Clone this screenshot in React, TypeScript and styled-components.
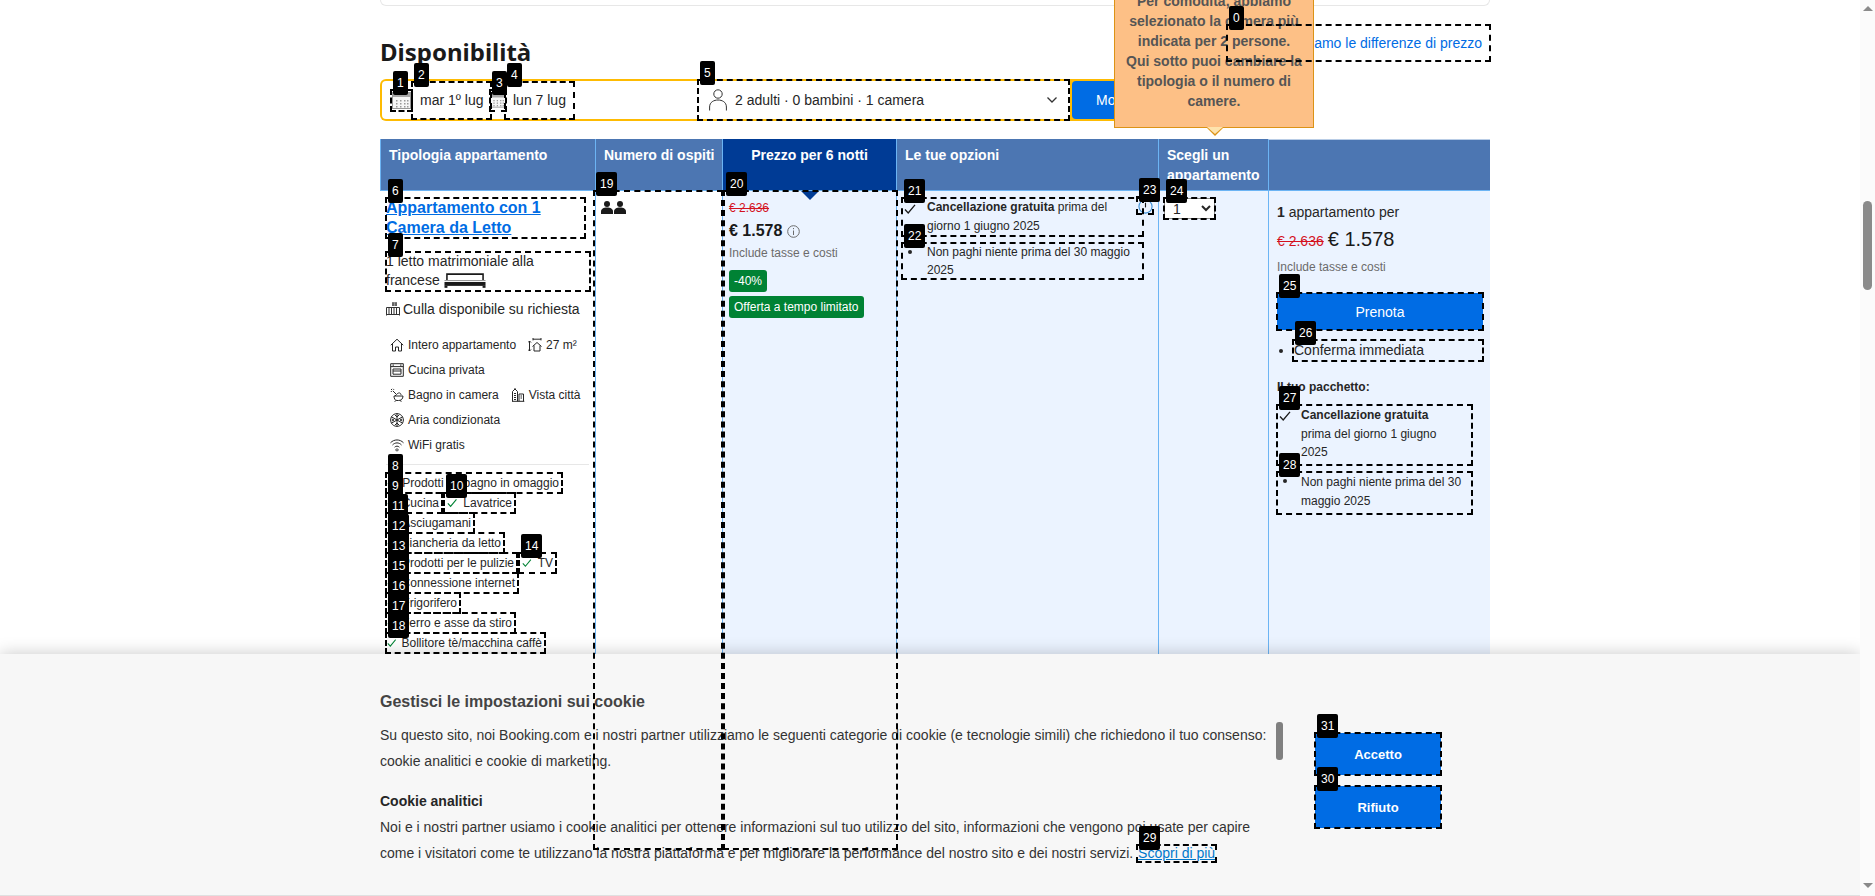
import { ReactNode } from "react";
import styled, { createGlobalStyle } from "styled-components";

const Reset = createGlobalStyle`
  html, body {
    margin: 0;
    height: 100%;
    overflow: hidden;
    background: #fff;
  }
  body {
    font-family: "Liberation Sans", Arial, sans-serif;
    color: #262626;
  }
  * { box-sizing: border-box; }
`;

const Screen = styled.div`
  display: flex;
  width: 1875px;
  height: 896px;
  overflow: hidden;
`;

const Main = styled.main`
  position: relative;
  flex: 1;
  height: 896px;
  padding-left: 380px;
  overflow: hidden;
`;

const Rail = styled.aside`
  width: 15px;
  height: 896px;
  background: #fbfbfb;
  display: flex;
  flex-direction: column;
  align-items: center;
  padding-top: 6px;
`;

const RailArrow = styled.div<{ $down?: boolean }>`
  width: 0;
  height: 0;
  border-left: 5px solid transparent;
  border-right: 5px solid transparent;
  ${(p) => (p.$down ? "border-top: 5px solid #8a8a8a;" : "border-bottom: 5px solid #8a8a8a;")}
`;

const RailThumb = styled.div`
  width: 9px;
  height: 89px;
  margin-top: 190px;
  margin-bottom: 593px;
  background: #8a8a8a;
  border-radius: 5px;
`;

const Content = styled.div`
  width: 1110px;
`;

const TopCard = styled.div`
  height: 6px;
  border: 1px solid #e7e7e7;
  border-top: 0;
  border-radius: 0 0 8px 8px;
`;

const TitleRow = styled.div`
  display: flex;
  justify-content: space-between;
  align-items: flex-start;
  margin-top: 19px;
  height: 54px;
`;

const Title = styled.h2`
  margin: 11px 0 0;
  font-family: "Noto Sans", sans-serif;
  font-size: 24px;
  line-height: 32px;
  font-weight: 700;
  color: #1a1a1a;
`;

/* --- annotation frames --- */
const Marked = styled.div<{ $w?: number; $h?: number; $ml?: number }>`
  position: relative;
  ${(p) => (p.$w ? `width: ${p.$w}px;` : "")}
  ${(p) => (p.$h ? `height: ${p.$h}px;` : "")}
  ${(p) => (p.$ml ? `margin-left: ${p.$ml}px;` : "")}
`;

const Frame = styled.div<{ $inset: string }>`
  position: absolute;
  inset: ${(p) => p.$inset};
  border: 2px dashed #000;
  z-index: 20;
  pointer-events: none;
`;

const Tag = styled.span`
  position: absolute;
  top: -20px;
  left: 1px;
  height: 24px;
  padding: 0 4px;
  background: #000;
  border-radius: 2px;
  color: #fff;
  font-size: 12px;
  line-height: 24px;
  font-weight: 400;
`;

const Mark = ({ n, inset = "-1px" }: { n: number; inset?: string }) => (
  <Frame $inset={inset}>
    <Tag>{n}</Tag>
  </Frame>
);

const PriceLink = styled.a`
  display: flex;
  align-items: center;
  justify-content: flex-end;
  height: 36px;
  padding-right: 8px;
  color: #006ce4;
  font-size: 14px;
  white-space: nowrap;
`;

/* --- search bar --- */
const SearchBar = styled.div`
  position: relative;
  display: flex;
  align-items: stretch;
  height: 42px;
  width: 860px;
  background: #febb02;
  border-radius: 6px;
`;

const DateField = styled.div`
  display: flex;
  align-items: center;
  width: 315px;
  margin: 2px 0 2px 2px;
  padding-left: 9px;
  background: #fff;
  border-radius: 4px 0 0 4px;
  font-size: 14px;
`;

const DateIconBox = styled(Marked)`
  display: flex;
  align-items: center;
  justify-content: center;
  height: 21px;
`;

const DateValue = styled(Marked)`
  display: flex;
  align-items: center;
  height: 37px;
  padding-left: 8px;
`;

const GuestField = styled(Marked)`
  display: flex;
  align-items: center;
  width: 373px;
  margin: 2px 0;
  padding: 0 12px;
  gap: 8px;
  background: #fff;
  font-size: 14px;
`;

const Chevron = styled.svg`
  margin-left: auto;
`;

const SearchButton = styled.button`
  width: 165px;
  margin: 2px;
  padding: 0 0 0 24px;
  border: 0;
  border-radius: 4px;
  background: #006ce4;
  color: #fff;
  font: 14px "Liberation Sans", Arial, sans-serif;
  text-align: left;
`;

const Tooltip = styled.div`
  position: absolute;
  left: 734px;
  bottom: -7px;
  width: 200px;
  padding: 16px 10px;
  background: #fdc086;
  border: 1px solid #dc9316;
  color: #555;
  font-size: 14px;
  line-height: 20px;
  font-weight: 700;
  text-align: center;
  z-index: 10;

  &::before,
  &::after {
    content: "";
    position: absolute;
    left: 92px;
    width: 0;
    height: 0;
    border-left: 8px solid transparent;
    border-right: 8px solid transparent;
  }
  &::before {
    bottom: -9px;
    border-top: 8px solid #dc9316;
  }
  &::after {
    bottom: -7px;
    border-top: 7px solid #fee3ad;
  }
`;

/* --- table --- */
const Table = styled.div`
  display: grid;
  grid-template-columns: 215px 127px 174px 262px 110px 222px;
  grid-template-rows: 52px 659px;
  margin-top: 18px;
`;

const HeadCell = styled.div<{ $active?: boolean; $last?: boolean }>`
  position: relative;
  padding: 6px 0 0 8px;
  background: ${(p) => (p.$active ? "#003b95" : "#4c76b2")};
  border-left: 1px solid #6cb4f4;
  border-bottom: 1px solid #6cb4f4;
  color: #fff;
  font-size: 14px;
  line-height: 20px;
  font-weight: 700;
  ${(p) => (p.$active ? "text-align: center; padding-left: 0;" : "")}
  ${(p) => (p.$last ? "border-top: 1px solid #b9cde6;" : "")}

  ${(p) =>
    p.$active
      ? `&::after {
    content: "";
    position: absolute;
    left: 78px;
    bottom: -10px;
    border-left: 9px solid transparent;
    border-right: 9px solid transparent;
    border-top: 9px solid #003b95;
    z-index: 2;
  }`
      : ""}
`;

const Cell = styled.div<{ $tint?: boolean }>`
  position: relative;
  background: ${(p) => (p.$tint ? "#ebf3ff" : "#fff")};
  border-left: 1px solid #6cb4f4;
`;

const RoomCell = styled(Cell)`
  padding: 7px 0 0 6px;
  border-left: 0;
`;

const RoomName = styled.a`
  display: block;
  color: #006ce4;
  font-size: 16px;
  line-height: 20px;
  font-weight: 700;
  text-decoration: underline;
`;

const BedLine = styled.div`
  padding-bottom: 1px;
  font-size: 14px;
  line-height: 19px;
`;

const BedIcon = styled.svg`
  vertical-align: -3px;
`;

const CribLine = styled.div`
  display: flex;
  align-items: center;
  gap: 3px;
  margin-top: 8px;
  height: 20px;
  font-size: 14px;
`;

const Facilities = styled.div`
  margin-top: 13px;
  padding-left: 4px;
`;

const FacilityRow = styled.div`
  display: flex;
  align-items: center;
  gap: 12px;
  height: 25px;
  font-size: 12px;
`;

const Facility = styled.span`
  display: inline-flex;
  align-items: center;
  gap: 4px;
`;

const Rule = styled.hr`
  width: 203px;
  height: 1px;
  margin: 7px 0 8px;
  border: 0;
  background: #e7e7e7;
`;

const PerkRow = styled.div`
  display: flex;
  height: 20px;
`;

const Perk = styled(Marked)<{ $second?: boolean }>`
  display: inline-flex;
  align-items: center;
  gap: ${(p) => (p.$second ? "6px" : "5px")};
  height: 20px;
  font-size: 12px;
  white-space: nowrap;
  padding: 0 3px 0 ${(p) => (p.$second ? "3px" : "1px")};
  ${(p) => (p.$second ? "margin-left: 2px;" : "")}
`;

const People = styled.svg`
  margin: 10px 0 0 5px;
  display: block;
`;

const PriceCell = styled(Cell)`
  padding: 9px 0 0 6px;
`;

const OldPrice = styled.div`
  color: #d4111e;
  font-size: 12px;
  line-height: 16px;
  text-decoration: line-through;
`;

const NowPrice = styled.div`
  display: flex;
  align-items: center;
  gap: 5px;
  margin-top: 3px;
  height: 24px;
  color: #1a1a1a;
  font-size: 16px;
  font-weight: 700;
`;

const TaxNote = styled.div`
  margin-top: 1px;
  color: #6b6b6b;
  font-size: 12px;
  line-height: 18px;
`;

const Badge = styled.div`
  width: fit-content;
  height: 22px;
  margin-top: 4px;
  padding: 0 5px;
  background: #008234;
  border-radius: 3px;
  color: #fff;
  font-size: 12px;
  line-height: 22px;
`;

const FirstBadge = styled(Badge)`
  margin-top: 8px;
`;

const OptionsCell = styled(Cell)`
  padding: 7px 15px 0 5px;
`;

const Option = styled(Marked)<{ $lh: number; $top?: number }>`
  padding: 0 10px 0 25px;
  font-size: 12px;
  line-height: ${(p) => p.$lh}px;
  ${(p) => (p.$top ? `margin-top: ${p.$top}px;` : "")}
`;

const OptionGlyph = styled.div`
  position: absolute;
  left: 2px;
  top: 5px;
  line-height: 0;
`;

const OptionDot = styled.i`
  position: absolute;
  left: 6px;
  top: 7px;
  width: 4px;
  height: 4px;
  border-radius: 50%;
  background: #262626;
`;

const HelpBox = styled(Marked)`
  position: absolute;
  top: -1px;
  right: -10px;
  width: 16px;
  height: 17px;
`;

const PickCell = styled(Cell)`
  padding: 7px 0 0 5px;
`;

const RoomSelect = styled.select`
  display: block;
  width: 51px;
  height: 21px;
  padding: 0 0 0 4px;
  border: 1px solid #8a8a8a;
  background: #fff;
  color: #262626;
  font: 14px "Liberation Sans", Arial, sans-serif;
`;

const ReserveCell = styled(Cell)`
  padding: 11px 7px 0 8px;
`;

const Lead = styled.div`
  font-size: 14px;
  line-height: 20px;
`;

const PriceLine = styled.div`
  display: flex;
  align-items: baseline;
  gap: 4px;
  height: 28px;
  margin-top: 3px;
  font-size: 20px;
  line-height: 28px;
  color: #1a1a1a;
`;

const PriceLineOld = styled.span`
  color: #d4111e;
  font-size: 14px;
  text-decoration: line-through;
`;

const ReserveTax = styled(TaxNote)`
  margin-top: 5px;
`;

const ReserveButton = styled.button`
  display: block;
  width: 100%;
  height: 37px;
  border: 0;
  border-radius: 2px;
  background: #006ce4;
  color: #fff;
  font: 14px "Liberation Sans", Arial, sans-serif;
`;

const ConfirmRow = styled.div`
  display: flex;
  align-items: center;
  margin-top: 10px;
`;

const ConfirmDot = styled.i`
  width: 4px;
  height: 4px;
  margin-left: 2px;
  border-radius: 50%;
  background: #262626;
`;

const Confirm = styled(Marked)`
  width: 190px;
  height: 21px;
  margin-left: 10px;
  padding-left: 1px;
  font-size: 14px;
  line-height: 21px;
`;

const PackageTitle = styled.div`
  margin-top: 17px;
  font-size: 12px;
  line-height: 18px;
  font-weight: 700;
`;

const PackageItem = styled(Marked)<{ $top: number }>`
  width: 195px;
  margin-top: ${(p) => p.$top}px;
  padding: 1px 8px 0 24px;
  font-size: 12px;
  line-height: 18.5px;
`;

/* --- cookie banner --- */
const Banner = styled.section`
  position: absolute;
  left: 0;
  right: 0;
  bottom: 0;
  height: 242px;
  display: flex;
  align-items: flex-start;
  padding: 36px 0 0 380px;
  background: #f7f7f7;
  border-bottom: 1px solid #e0e0e0;
  box-shadow: 0 0 16px rgba(0, 0, 0, 0.22);
  z-index: 5;
`;

const BannerText = styled.div`
  width: 896px;
  color: #333;
  font-size: 14px;
  line-height: 26px;
`;

const BannerTitle = styled.h3`
  margin: 0 0 8px;
  color: #444;
  font-size: 16px;
  line-height: 24px;
  font-weight: 700;
`;

const BannerPara = styled.p`
  margin: 0 0 14px;
`;

const BannerSub = styled.h4`
  margin: 0;
  color: #262626;
  font-size: 14px;
  line-height: 26px;
  font-weight: 700;
`;

const MoreWrap = styled(Marked)`
  display: inline-block;
  line-height: 17px;
  padding: 0 1px;
`;

const MoreLink = styled.a`
  color: #0077cc;
  text-decoration: underline;
`;

const BannerThumb = styled.div`
  width: 7px;
  height: 38px;
  margin-top: 32px;
  background: #808080;
  border-radius: 3px;
`;

const BannerActions = styled.div`
  display: flex;
  flex-direction: column;
  gap: 11px;
  margin: 43px 0 0 32px;
`;

const BannerButton = styled.button`
  display: block;
  width: 126px;
  height: 42px;
  border: 0;
  background: #006ce4;
  color: #fff;
  font: 700 13px "Liberation Sans", Arial, sans-serif;
`;

/* --- drawings --- */
const Check = ({ c = "#008234" }: { c?: string }) => (
  <svg width="12" height="12" viewBox="0 0 12 12" fill="none" stroke={c} strokeWidth="1.3">
    <path d="M1 6.5 L4.2 10 L11 1.8" />
  </svg>
);

const Calendar = ({ w = 19 }: { w?: number }) => (
  <svg width={w} height="18" viewBox="0 0 19 18" fill="none">
    <rect x="0.5" y="1.5" width="18" height="16" fill="#f7f7f7" stroke="#999" />
    <rect x="1" y="2" width="17" height="4" fill="#a8a8a8" />
    {[4, 8, 12, 15].map((x) =>
      [9, 12, 15].map((y) => <rect key={`${x}-${y}`} x={x} y={y} width="1.5" height="1.5" fill="#999" />)
    )}
  </svg>
);

const Line = ({ d, w = 14, h = 14, box = "0 0 14 14" }: { d: string; w?: number; h?: number; box?: string }) => (
  <svg width={w} height={h} viewBox={box} fill="none" stroke="#262626" strokeWidth="1">
    <path d={d} />
  </svg>
);

const icons: Record<string, ReactNode> = {
  home: <Line d="M0.8 7.2 L7 1.2 L13.2 7.2 M2.5 5.8 V13 H5.5 V9 H8.5 V13 H11.5 V5.8" />,
  size: (
    <Line d="M5 1.2 H13 M5 0 V2.4 M13 0 V2.4 M1.5 3 V13 M0 4.5 L1.5 3 L3 4.5 M0 11.5 L1.5 13 L3 11.5 M4.5 8.5 L9 4.5 L13.5 8.5 M6 7.5 V13 H12 V7.5" />
  ),
  oven: <Line d="M0.7 0.7 H13.3 V13.3 H0.7 Z M0.7 3.6 H13.3 M3 6 H11 V11.2 H3 Z M3 8 H11 M2.5 2.1 H4 M10 2.1 H11.5" />,
  bath: (
    <Line d="M1 1 L2.2 2.2 M3 0.8 L4 1.8 M0.8 3 L1.8 4 M3 3 L6.5 6.5 L5 8 M7 6 C9 4 11 5 11 7 M4 8 H13 C13 11 11 12.5 8.5 12.5 H7 C5 12.5 4 10.5 4 8 M5.5 12.5 L4.8 13.8 M10.5 12.2 L11.2 13.8" />
  ),
  city: (
    <Line d="M1 13.3 H13.3 M1.5 13.3 V3.5 L4 1 L6.5 3.5 V13.3 M4 1 V0 M8 13.3 V6 H12.5 V13.3 M3 5.5 H5 M3 7.5 H5 M3 9.5 H5 M3 11.5 H5 M9.5 8 H11 M9.5 10 H11" />
  ),
  snow: (
    <Line d="M7 0.6 V13.4 M1.4 3.8 L12.6 10.2 M1.4 10.2 L12.6 3.8 M7 0.6 A6.4 6.4 0 1 1 6.99 0.6 M5 2 L7 4 L9 2 M5 12 L7 10 L9 12 M1.8 6 L4 7 L1.8 8 M12.2 6 L10 7 L12.2 8" />
  ),
  wifi: (
    <Line d="M0.5 4.8 C4 1 10 1 13.5 4.8 M2.5 7 C5 4.2 9 4.2 11.5 7 M4.6 9.2 C6 7.8 8 7.8 9.4 9.2 M7 10.8 A1.1 1.1 0 1 1 6.99 10.8" />
  ),
};

const Crib = () => (
  <svg width="14" height="14" viewBox="0 0 14 14" fill="none" stroke="#333" strokeWidth="1">
    <path d="M0.5 5.5 H13.5 M0.5 12.5 H13.5 M0.5 5.5 V13.5 M13.5 5.5 V13.5 M3 5.5 V12.5 M5.5 5.5 V12.5 M8 5.5 V12.5 M10.5 5.5 V12.5 M6 1 H11 M6 3 H11 M7 0.5 V4 M10 0.5 V4" />
  </svg>
);

const Bed = () => (
  <BedIcon width="42" height="15" viewBox="0 0 43 15">
    <path d="M3 7 V1 H40 V7" fill="none" stroke="#1a1a1a" strokeWidth="1.6" />
    <rect x="0.5" y="7" width="42" height="1" fill="#999" />
    <rect x="0.5" y="9" width="42" height="4" fill="#1a1a1a" />
    <rect x="0.5" y="13" width="3" height="2" fill="#1a1a1a" />
    <rect x="39.5" y="13" width="3" height="2" fill="#1a1a1a" />
  </BedIcon>
);

const Person = () => (
  <svg width="18" height="22" viewBox="0 0 18 22" fill="none" stroke="#333" strokeWidth="1">
    <circle cx="9" cy="5" r="4.2" />
    <path d="M0.6 21.5 V18 C0.6 13 5 11 9 11 C13 11 17.4 13 17.4 18 V21.5" />
  </svg>
);

const Info = () => (
  <svg width="13" height="13" viewBox="0 0 13 13" fill="none" stroke="#6b6b6b" strokeWidth="1">
    <circle cx="6.5" cy="6.5" r="5.8" />
    <path d="M6.5 5.5 V10 M6.5 3 V4.2" />
  </svg>
);

const HelpIcon = styled.svg`
  display: block;
  margin: 2px 0 0 1px;
`;

const Help = () => (
  <HelpIcon width="15" height="15" viewBox="0 0 16 16" fill="none" stroke="#3d8fd6" strokeWidth="1.2">
    <circle cx="8" cy="8" r="7" />
    <path d="M8 4 V9" stroke="#1a1a1a" />
  </HelpIcon>
);

const Facil = ({ icon, text }: { icon: string; text: string }) => (
  <Facility>
    {icons[icon]}
    {text}
  </Facility>
);

const PerkItem = ({ n, text, w, second }: { n: number; text: string; w: number; second?: boolean }) => (
  <Perk $w={w} $second={second}>
    <Check />
    {text}
    <Mark n={n} />
  </Perk>
);

export default function App() {
  return (
    <>
      <Reset />
      <Screen>
        <Main>
          <Content>
            <TopCard />
            <TitleRow>
              <Title>Disponibilità</Title>
              <Marked $w={263} $h={36}>
                <PriceLink>Perché vediamo le differenze di prezzo</PriceLink>
                <Mark n={0} />
              </Marked>
            </TitleRow>

            <SearchBar>
              <DateField>
                <DateIconBox $w={21}>
                  <Calendar />
                  <Mark n={1} />
                </DateIconBox>
                <DateValue $w={79}>
                  mar 1º lug
                  <Mark n={2} />
                </DateValue>
                <DateIconBox $w={16} $ml={-1}>
                  <Calendar w={16} />
                  <Mark n={3} />
                </DateIconBox>
                <DateValue $w={69} $ml={-1}>
                  lun 7 lug
                  <Mark n={4} />
                </DateValue>
              </DateField>
              <GuestField>
                <Person />
                2 adulti · 0 bambini · 1 camera
                <Chevron width="12" height="8" viewBox="0 0 12 8" fill="none" stroke="#333" strokeWidth="1.3">
                  <path d="M1.5 1.5 L6 6 L10.5 1.5" />
                </Chevron>
                <Mark n={5} inset="-2px 0" />
              </GuestField>
              <SearchButton>Modifica la ricerca</SearchButton>
              <Tooltip>
                Per comodità, abbiamo selezionato la camera più indicata per 2 persone. Qui sotto puoi cambiare la tipologia o il numero di camere.
              </Tooltip>
            </SearchBar>

            <Table>
              <HeadCell>Tipologia appartamento</HeadCell>
              <HeadCell>Numero di ospiti</HeadCell>
              <HeadCell $active>Prezzo per 6 notti</HeadCell>
              <HeadCell>Le tue opzioni</HeadCell>
              <HeadCell>Scegli un appartamento</HeadCell>
              <HeadCell $last />

              <RoomCell>
                <Marked $w={199}>
                  <RoomName>Appartamento con 1 Camera da Letto</RoomName>
                  <Mark n={6} />
                </Marked>
                <Marked $w={204} style={{ marginTop: 14 }}>
                  <BedLine>
                    1 letto matrimoniale alla francese <Bed />
                  </BedLine>
                  <Mark n={7} />
                </Marked>
                <CribLine>
                  <Crib />
                  Culla disponibile su richiesta
                </CribLine>
                <Facilities>
                  <FacilityRow>
                    <Facil icon="home" text="Intero appartamento" />
                    <Facil icon="size" text="27 m²" />
                  </FacilityRow>
                  <FacilityRow>
                    <Facil icon="oven" text="Cucina privata" />
                  </FacilityRow>
                  <FacilityRow>
                    <Facil icon="bath" text="Bagno in camera" />
                    <Facil icon="city" text="Vista città" />
                  </FacilityRow>
                  <FacilityRow>
                    <Facil icon="snow" text="Aria condizionata" />
                  </FacilityRow>
                  <FacilityRow>
                    <Facil icon="wifi" text="WiFi gratis" />
                  </FacilityRow>
                </Facilities>
                <Rule />
                <PerkRow>
                  <PerkItem n={8} w={176} text="Prodotti da bagno in omaggio" />
                </PerkRow>
                <PerkRow>
                  <PerkItem n={9} w={56} text="Cucina" />
                  <PerkItem n={10} w={71} second text="Lavatrice" />
                </PerkRow>
                <PerkRow>
                  <PerkItem n={11} w={88} text="Asciugamani" />
                </PerkRow>
                <PerkRow>
                  <PerkItem n={12} w={118} text="Biancheria da letto" />
                </PerkRow>
                <PerkRow>
                  <PerkItem n={13} w={131} text="Prodotti per le pulizie" />
                  <PerkItem n={14} w={37} second text="TV" />
                </PerkRow>
                <PerkRow>
                  <PerkItem n={15} w={132} text="Connessione internet" />
                </PerkRow>
                <PerkRow>
                  <PerkItem n={16} w={74} text="Frigorifero" />
                </PerkRow>
                <PerkRow>
                  <PerkItem n={17} w={129} text="Ferro e asse da stiro" />
                </PerkRow>
                <PerkRow>
                  <PerkItem n={18} w={159} text="Bollitore tè/macchina caffè" />
                </PerkRow>
              </RoomCell>

              <Cell>
                <People width="25" height="13" viewBox="0 0 25 13" fill="#1a1a1a">
                  <circle cx="6" cy="3" r="3" />
                  <path d="M0 13 V10.5 C0 8 2.5 6.5 6 6.5 C9.5 6.5 12 8 12 10.5 V13 Z" />
                  <circle cx="19" cy="3" r="3" />
                  <path d="M13 13 V10.5 C13 8 15.5 6.5 19 6.5 C22.5 6.5 25 8 25 10.5 V13 Z" />
                </People>
                <Mark n={19} inset="-1px -1px 0 -3px" />
              </Cell>

              <PriceCell $tint>
                <OldPrice>€ 2.636</OldPrice>
                <NowPrice>
                  € 1.578
                  <Info />
                </NowPrice>
                <TaxNote>Include tasse e costi</TaxNote>
                <FirstBadge>-40%</FirstBadge>
                <Badge>Offerta a tempo limitato</Badge>
                <Mark n={20} inset="-1px -2px 0 0" />
              </PriceCell>

              <OptionsCell $tint>
                <Option $lh={19}>
                  <OptionGlyph>
                    <Check c="#1a1a1a" />
                  </OptionGlyph>
                  <b>Cancellazione gratuita</b> prima del giorno 1 giugno 2025
                  <HelpBox>
                    <Help />
                    <Mark n={23} />
                  </HelpBox>
                  <Mark n={21} />
                </Option>
                <Option $lh={18} $top={7}>
                  <OptionDot />
                  Non paghi niente prima del 30 maggio 2025
                  <Mark n={22} />
                </Option>
              </OptionsCell>

              <PickCell $tint>
                <Marked $w={51} $h={21}>
                  <RoomSelect defaultValue="1">
                    <option value="1">1</option>
                  </RoomSelect>
                  <Mark n={24} />
                </Marked>
              </PickCell>

              <ReserveCell $tint>
                <Lead>
                  <b>1</b> appartamento per
                </Lead>
                <PriceLine>
                  <PriceLineOld>€ 2.636</PriceLineOld>€ 1.578
                </PriceLine>
                <ReserveTax>Include tasse e costi</ReserveTax>
                <Marked style={{ marginTop: 17 }}>
                  <ReserveButton>Prenota</ReserveButton>
                  <Mark n={25} />
                </Marked>
                <ConfirmRow>
                  <ConfirmDot />
                  <Confirm>
                    Conferma immediata
                    <Mark n={26} />
                  </Confirm>
                </ConfirmRow>
                <PackageTitle>Il tuo pacchetto:</PackageTitle>
                <PackageItem $top={9} $h={60}>
                  <OptionGlyph>
                    <Check c="#1a1a1a" />
                  </OptionGlyph>
                  <b>Cancellazione gratuita</b>
                  <br />
                  prima del giorno 1 giugno 2025
                  <Mark n={27} />
                </PackageItem>
                <PackageItem $top={7} $h={42}>
                  <OptionDot />
                  Non paghi niente prima del 30 maggio 2025
                  <Mark n={28} />
                </PackageItem>
              </ReserveCell>
            </Table>
          </Content>

          <Banner>
            <BannerText>
              <BannerTitle>Gestisci le impostazioni sui cookie</BannerTitle>
              <BannerPara>
                Su questo sito, noi Booking.com e i nostri partner utilizziamo le seguenti categorie di cookie (e tecnologie simili) che richiedono il tuo consenso: cookie analitici e cookie di marketing.
              </BannerPara>
              <BannerSub>Cookie analitici</BannerSub>
              Noi e i nostri partner usiamo i cookie analitici per ottenere informazioni sul tuo utilizzo del sito, informazioni che vengono poi usate per capire come i visitatori come te utilizzano la nostra piattaforma e per migliorare la performance del nostro sito e dei nostri servizi.{" "}
              <MoreWrap>
                <MoreLink>Scopri di più</MoreLink>
                <Mark n={29} />
              </MoreWrap>
            </BannerText>
            <BannerThumb />
            <BannerActions>
              <Marked>
                <BannerButton>Accetto</BannerButton>
                <Mark n={31} />
              </Marked>
              <Marked>
                <BannerButton>Rifiuto</BannerButton>
                <Mark n={30} />
              </Marked>
            </BannerActions>
          </Banner>
        </Main>
        <Rail>
          <RailArrow />
          <RailThumb />
          <RailArrow $down />
        </Rail>
      </Screen>
    </>
  );
}
